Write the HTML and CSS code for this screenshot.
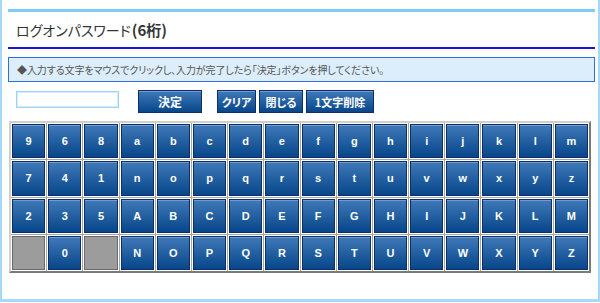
FILE: index.html
```html
<!DOCTYPE html>
<html lang="ja">
<head>
  <meta charset="UTF-8">
  <title>ログオンパスワード</title>
  <link rel="stylesheet" href="styles.css">
</head>
<body>
  <div class="frame">
    <div class="title-bar">
      <h1 class="title">ログオンパスワード<strong>(6桁)</strong></h1>
    </div>

    <p class="notice">◆入力する文字をマウスでクリックし、入力が完了したら「決定」ボタンを押してください。</p>

    <div class="controls">
      <input class="pw-input" type="password">
      <button class="btn btn-ok">決定</button>
      <div class="btn-group">
        <button class="btn btn-clear">クリア</button>
        <button class="btn btn-close">閉じる</button>
        <button class="btn btn-del">1文字削除</button>
      </div>
    </div>

    <div class="keyboard">
      <div class="cell"><span class="key">9</span></div>
      <div class="cell"><span class="key">6</span></div>
      <div class="cell"><span class="key">8</span></div>
      <div class="cell"><span class="key">a</span></div>
      <div class="cell"><span class="key">b</span></div>
      <div class="cell"><span class="key">c</span></div>
      <div class="cell"><span class="key">d</span></div>
      <div class="cell"><span class="key">e</span></div>
      <div class="cell"><span class="key">f</span></div>
      <div class="cell"><span class="key">g</span></div>
      <div class="cell"><span class="key">h</span></div>
      <div class="cell"><span class="key">i</span></div>
      <div class="cell"><span class="key">j</span></div>
      <div class="cell"><span class="key">k</span></div>
      <div class="cell"><span class="key">l</span></div>
      <div class="cell"><span class="key">m</span></div>

      <div class="cell"><span class="key">7</span></div>
      <div class="cell"><span class="key">4</span></div>
      <div class="cell"><span class="key">1</span></div>
      <div class="cell"><span class="key">n</span></div>
      <div class="cell"><span class="key">o</span></div>
      <div class="cell"><span class="key">p</span></div>
      <div class="cell"><span class="key">q</span></div>
      <div class="cell"><span class="key">r</span></div>
      <div class="cell"><span class="key">s</span></div>
      <div class="cell"><span class="key">t</span></div>
      <div class="cell"><span class="key">u</span></div>
      <div class="cell"><span class="key">v</span></div>
      <div class="cell"><span class="key">w</span></div>
      <div class="cell"><span class="key">x</span></div>
      <div class="cell"><span class="key">y</span></div>
      <div class="cell"><span class="key">z</span></div>

      <div class="cell"><span class="key">2</span></div>
      <div class="cell"><span class="key">3</span></div>
      <div class="cell"><span class="key">5</span></div>
      <div class="cell"><span class="key">A</span></div>
      <div class="cell"><span class="key">B</span></div>
      <div class="cell"><span class="key">C</span></div>
      <div class="cell"><span class="key">D</span></div>
      <div class="cell"><span class="key">E</span></div>
      <div class="cell"><span class="key">F</span></div>
      <div class="cell"><span class="key">G</span></div>
      <div class="cell"><span class="key">H</span></div>
      <div class="cell"><span class="key">I</span></div>
      <div class="cell"><span class="key">J</span></div>
      <div class="cell"><span class="key">K</span></div>
      <div class="cell"><span class="key">L</span></div>
      <div class="cell"><span class="key">M</span></div>

      <div class="cell"><span class="key blank"></span></div>
      <div class="cell"><span class="key">0</span></div>
      <div class="cell"><span class="key blank"></span></div>
      <div class="cell"><span class="key">N</span></div>
      <div class="cell"><span class="key">O</span></div>
      <div class="cell"><span class="key">P</span></div>
      <div class="cell"><span class="key">Q</span></div>
      <div class="cell"><span class="key">R</span></div>
      <div class="cell"><span class="key">S</span></div>
      <div class="cell"><span class="key">T</span></div>
      <div class="cell"><span class="key">U</span></div>
      <div class="cell"><span class="key">V</span></div>
      <div class="cell"><span class="key">W</span></div>
      <div class="cell"><span class="key">X</span></div>
      <div class="cell"><span class="key">Y</span></div>
      <div class="cell"><span class="key">Z</span></div>
    </div>
  </div>
</body>
</html>
```

FILE: styles.css
```css
body {
  margin: 0;
  padding: 0;
  background-color: white;
  font-family: "Noto Sans CJK JP", "Liberation Sans", sans-serif;
  color: #333;
}
.frame {
  width: 587px;
  height: 290px;
  padding: 9px 3px 0 6px;
  border-left: 2px solid #a8d8f8;
  border-right: 3px solid #a8d8f8;
  border-bottom: 3px solid #a8d8f8;
}
.title-bar {
  border-top: 3px solid #7ccbf3;
  border-bottom: 2px solid #1818d4;
  height: 35px;
  display: flex;
  align-items: center;
}
.title {
  margin: 0 0 1px 8px;
  font-size: 14px;
  font-weight: normal;
  color: #333;
  font-feature-settings: "palt";
}
.title strong {
  font-size: 15px;
  font-weight: bold;
  margin-left: 1px;
}
.notice {
  margin: 8px 0 0 0;
  height: 23px;
  line-height: 23px;
  padding-left: 8px;
  background-color: #dceefc;
  border: 1px solid #2e6ee0;
  font-size: 10px;
  letter-spacing: -0.1px;
  color: #555;
  font-feature-settings: "palt";
}
.controls {
  display: flex;
  align-items: flex-start;
  margin-top: 8px;
  padding-left: 8px;
  height: 31px;
}
.pw-input {
  width: 97px;
  height: 15px;
  margin: 1px 19px 0 0;
  padding: 0 2px;
  border: 1px solid #9dd2f4;
  box-shadow: inset 0 0 0 1px #d6edfc;
  outline: none;
}
.btn {
  height: 23px;
  padding: 0;
  border: 1px solid #0d2f66;
  background: linear-gradient(#4079b8, #06468a);
  box-shadow: inset 0 1px 0 #6d9cd2;
  color: white;
  font-family: "Noto Sans CJK JP", sans-serif;
  font-size: 12px;
  font-weight: bold;
  font-feature-settings: "palt";
  cursor: pointer;
}
.btn-ok {
  width: 64px;
  margin-right: 15px;
}
.btn-group {
  display: flex;
  gap: 3px;
}
.btn-clear {
  width: 39px;
  font-size: 11px;
}
.btn-close {
  width: 44px;
  font-size: 11px;
}
.btn-del {
  width: 68px;
  font-size: 11px;
}
.keyboard {
  display: grid;
  grid-template-columns: repeat(16, 1fr);
  grid-template-rows: repeat(4, 1fr);
  gap: 1px;
  width: 578px;
  height: 148px;
  margin-left: 1px;
  background-color: #a6a6a6;
  border: 2px solid;
  border-color: #cfcfcf #7a7a7a #7a7a7a #cfcfcf;
}
.cell {
  background-color: white;
  padding: 1px;
  display: flex;
}
.key {
  flex: 1;
  display: flex;
  align-items: center;
  justify-content: center;
  border: 1px solid #0d2f66;
  background: linear-gradient(#4079b8, #06468a);
  box-shadow: inset 0 1px 0 #6d9cd2;
  color: white;
  font-family: "Liberation Sans", sans-serif;
  font-size: 11px;
  font-weight: bold;
  cursor: pointer;
}
.key.blank {
  background: #9c9c9c;
  border-color: #6a6a6a;
  box-shadow: none;
  cursor: default;
}
```
